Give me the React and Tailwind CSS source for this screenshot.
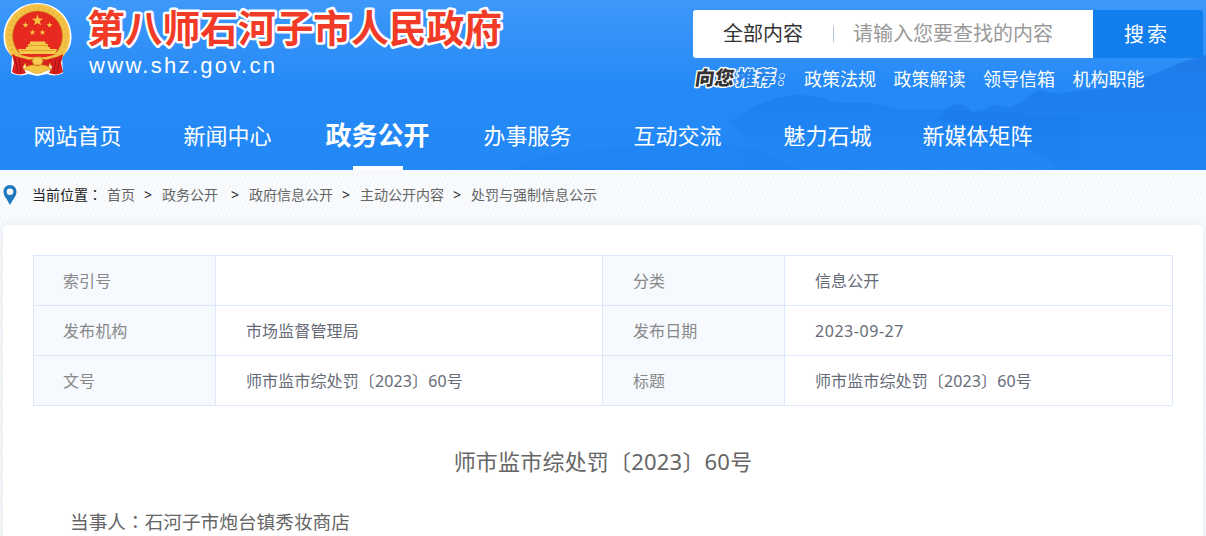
import React from "react";

const nav = ["网站首页", "新闻中心", "政务公开", "办事服务", "互动交流", "魅力石城", "新媒体矩阵"];
const links = ["政策法规", "政策解读", "领导信箱", "机构职能"];
const rows = [
  ["索引号", "", "分类", "信息公开"],
  ["发布机构", "市场监督管理局", "发布日期", "2023-09-27"],
  ["文号", "师市监市综处罚〔2023〕60号", "标题", "师市监市综处罚〔2023〕60号"],
];

function Star({ x, y, r }) {
  const points = Array.from({ length: 10 }, (_, i) => {
    const a = (Math.PI / 5) * i - Math.PI / 2;
    const d = i % 2 ? r * 0.4 : r;
    return `${x + d * Math.cos(a)},${y + d * Math.sin(a)}`;
  }).join(" ");
  return <polygon points={points} fill="#f6c143" />;
}

function Emblem() {
  return (
    <svg width="70" height="76" viewBox="3 2 70 76" className="block">
      <path d="M37.500 3C18 3 3.500 18 3.500 37C3.500 46 7 52 12 56L11 73C17 76 23 76 28 74L37.500 76L47 74C52 76 58 76 63 73L62 56C68 52 71.500 46 71.500 37C71.500 18 57 3 37.500 3Z" fill="#fff" />
      <circle cx="37.500" cy="36.500" r="32.500" fill="#f4c246" />
      <circle cx="37.500" cy="36.500" r="28.500" fill="none" stroke="#dda42e" strokeWidth="3" strokeDasharray="2 3" opacity=".35" />
      <circle cx="37.500" cy="36" r="25" fill="#e62a20" stroke="#c98a1d" strokeWidth=".8" />
      <Star x={37.5} y={20.500} r={6} />
      <Star x={25.5} y={25} r={3.2} />
      <Star x={49.5} y={25} r={3.2} />
      <Star x={32.5} y={32.500} r={3.2} />
      <Star x={42.500} y={32.500} r={3.2} />
      <path d="M30 41.500H45L46 44H48V47H50V49H57L55 54H20L18 49H26V47H28V44H30Z" fill="#f7ca4d" />
      <path d="M27 45.500H48M20 50.500H55" stroke="#d59721" strokeWidth=".8" />
      <path d="M12 54C17 57 22 58 27 59L23 67L26 73C21 75 16 75 12 72L14 63Z" fill="#d8201c" />
      <path d="M63 54C58 57 53 58 48 59L52 67L49 73C54 75 59 75 63 72L61 63Z" fill="#d8201c" />
      <path d="M15 58L18 73M60 58L57 73M19 59L21 73M56 59L54 73" stroke="#a91217" strokeWidth="1" />
      <path d="M24 59Q37.500 62 51 59L48 68H27Z" fill="#d8201c" />
      <path d="M21 55Q37.500 60 54 55L49 59H26Z" fill="#f4c544" />
      <path d="M34 57H41L43 61L41 65H34L32 61Z" fill="#f6cb4f" stroke="#c98a1d" strokeWidth=".8" />
      <path d="M23 69Q31 63 37.500 66Q44 63 52 69L45 71Q37.500 76 30 71Z" fill="#f4c544" stroke="#c98a1d" strokeWidth=".5" />
    </svg>
  );
}

function Hills() {
  return (
    <svg className="absolute inset-0" width="1206" height="170" viewBox="0 0 1206 170">
      <defs>
        <linearGradient id="mid" x1="0" y1="0" x2="0" y2="1">
          <stop offset="0" stopColor="#1275e8" stopOpacity=".45" />
          <stop offset="1" stopColor="#1a80f0" stopOpacity=".1" />
        </linearGradient>
        <linearGradient id="near" x1="0" y1="0" x2="0" y2="1">
          <stop offset="0" stopColor="#136cdd" stopOpacity=".55" />
          <stop offset=".5" stopColor="#1573e6" stopOpacity=".42" />
          <stop offset="1" stopColor="#177bed" stopOpacity=".3" />
        </linearGradient>
      </defs>
      <path d="M515 170Q545 153 570 152L605 149L620 146L640 148L670 143L700 138L725 143L760 150L800 170Z" fill="#1279ea" opacity=".16" />
      <path d="M730 122Q765 95 800 95Q820 96 835 102L870 103L900 110L945 109L975 112L1080 116V170H740Q760 150 730 122Z" fill="url(#mid)" />
      <path d="M938 120L948 108L955 104L964 105L972 112L985 109L995 105L1008 108L1022 102L1026 97L1040 90L1058 94L1075 91L1110 88L1150 76L1180 63L1206 55V170H1060Q1010 130 938 120Z" fill="url(#near)" />
    </svg>
  );
}

function Crumb({ children, before, after }) {
  return (
    <>
      <span className="text-[#666]">{children}</span>
      {before && <span className={`w-[10px] text-center text-[#222] ${before} ${after}`}>&gt;</span>}
    </>
  );
}

export default function App() {
  return (
    <div className="h-[536px] w-[1206px] overflow-hidden bg-[#f6f9fc] bg-[repeating-linear-gradient(110deg,#f9fbfd_0px,#f9fbfd_2px,#f2f6fa_3px,#f9fbfd_4px)] font-['Noto_Sans','Noto_Sans_CJK_SC',sans-serif]">
      <header className="relative h-[170px] bg-linear-to-b from-[#3d98f9] via-[#258af7] via-50% to-[#2288f6]">
        <Hills />
        <div className="relative flex h-[101px] justify-between px-[3px]">
          <div className="flex pt-[2px]">
            <Emblem />
            <div className="ml-[14px]">
              <svg width="424" height="54" viewBox="0 0 424 54" className="-mb-1 block overflow-visible">
                <text x="0" y="40" textLength="415" lengthAdjust="spacingAndGlyphs" fontSize="37.500" fontWeight="700" fontFamily="'Noto Sans CJK SC', sans-serif" fill="#f13b27" stroke="#fff" strokeWidth="5" strokeLinejoin="round" paintOrder="stroke">第八师石河子市人民政府</text>
              </svg>
              <div className="ml-[2px] font-['Liberation_Sans',sans-serif] text-[22px] leading-[28px] tracking-[2.3px] text-white">www.shz.gov.cn</div>
            </div>
          </div>
          <div className="w-[510px] pt-[10px]">
            <div className="flex h-12 overflow-hidden rounded-[3px] text-[20px] leading-[48px]">
              <div className="flex w-[400px] items-center bg-white pl-[30px]">
                <span className="w-[110px] text-[#333]">全部内容</span>
                <span className="h-4 w-px bg-[#b8c7d8]" />
                <span className="ml-[19px] text-[#999]">请输入您要查找的内容</span>
              </div>
              <div className="w-[110px] bg-[#127eee] pl-[31px] pt-px tracking-[3px] text-white">搜索</div>
            </div>
            <div className="flex h-[42px] items-center">
              <svg width="111" height="28" viewBox="0 0 111 28" className="block shrink-0 overflow-visible">
                <g transform="translate(2 0) skewX(-8)" fontFamily="'Noto Sans CJK SC', sans-serif" fontWeight="900" fontSize="19.500" strokeLinejoin="round">
                  <text x="2" y="20" fill="#333" stroke="#fff" strokeWidth="3" paintOrder="stroke">向您</text>
                  <text x="43" y="20" fill="#2485ed" stroke="#fff" strokeWidth="2.400" paintOrder="stroke">推荐</text>
                  <text x="85" y="20" fill="#2485ed" stroke="#fff" strokeWidth="1.400" paintOrder="stroke">:</text>
                </g>
              </svg>
              <div className="flex gap-[17.500px] text-[18px] text-white">
                {links.map((l) => <span key={l}>{l}</span>)}
              </div>
            </div>
          </div>
        </div>
        <nav className="relative flex h-[69px] px-[2.500px] text-white">
          {nav.map((n, i) => (
            <div key={n} className={`flex w-[150px] flex-col items-center justify-between whitespace-nowrap ${i === 2 ? "text-[26px] font-bold" : "text-[22px]"}`}>
              <span className="leading-[69px]">{n}</span>
              {i === 2 && <span className="-mt-1 h-1 w-[50px] shrink-0 bg-white" />}
            </div>
          ))}
        </nav>
      </header>

      <div className="flex h-[55px] items-center pb-[6px] pl-[3px] text-[14px] whitespace-nowrap">
        <svg width="14" height="20" viewBox="0 0 14 20" className="mt-px mr-[15px]">
          <path fillRule="evenodd" d="M7 0C3 0 .5 3 .5 6.700C.5 11 4 14 7 20C10 14 13.500 11 13.500 6.700C13.500 3 11 0 7 0ZM7 3.500A3.300 3.300 0 1 1 7 10.100A3.300 3.300 0 0 1 7 3.500Z" fill="#1f78bd" />
        </svg>
        <span className="mr-[5px] text-[#222]">当前位置<span lang="zh-TW" className="font-['Noto_Sans_CJK_TC',sans-serif] leading-none">：</span></span>
        <Crumb before="ml-[8px]" after="mr-[9px]">首页</Crumb>
        <Crumb before="ml-[12px]" after="mr-[9px]">政务公开</Crumb>
        <Crumb before="ml-[8px]" after="mr-[9px]">政府信息公开</Crumb>
        <Crumb before="ml-[8px]" after="mr-[9px]">主动公开内容</Crumb>
        <Crumb>处罚与强制信息公示</Crumb>
      </div>

      <main className="mx-[3px] h-[330px] rounded-[5px] bg-white px-[30px] pt-[30px] shadow-[0_0_12px_rgba(80,120,160,0.12)]">
        <div className="grid grid-cols-[182px_387px_182px_388px] border-t border-l border-[#dbe7fb] text-[16px]">
          {rows.flatMap((r, y) =>
            r.map((c, x) => (
              <div key={`${y}-${x}`} className={`h-[50px] border-r border-b border-[#dbe7fb] leading-[50px] ${x % 2 ? "pl-[30px] text-[#666b78]" : x ? "bg-[#f6faff] pl-[30px] text-[#888]" : "bg-[#f6faff] pl-[29px] text-[#888]"} ${/^\d/.test(c) ? "tracking-[0.55px]" : "tracking-[0.12px]"}`}>{c}</div>
            ))
          )}
        </div>
        <h1 className="mt-[35px] text-center text-[22px] leading-10 tracking-[0.2px] text-[#666]">师市监市综处罚〔2023〕60号</h1>
        <p className="mt-[25px] pl-[37px] text-[18.670px] leading-[32px] text-[#666]">当事人<span lang="zh-TW" className="font-['Noto_Sans_CJK_TC',sans-serif] leading-none">：</span>石河子市炮台镇秀妆商店</p>
      </main>
    </div>
  );
}
